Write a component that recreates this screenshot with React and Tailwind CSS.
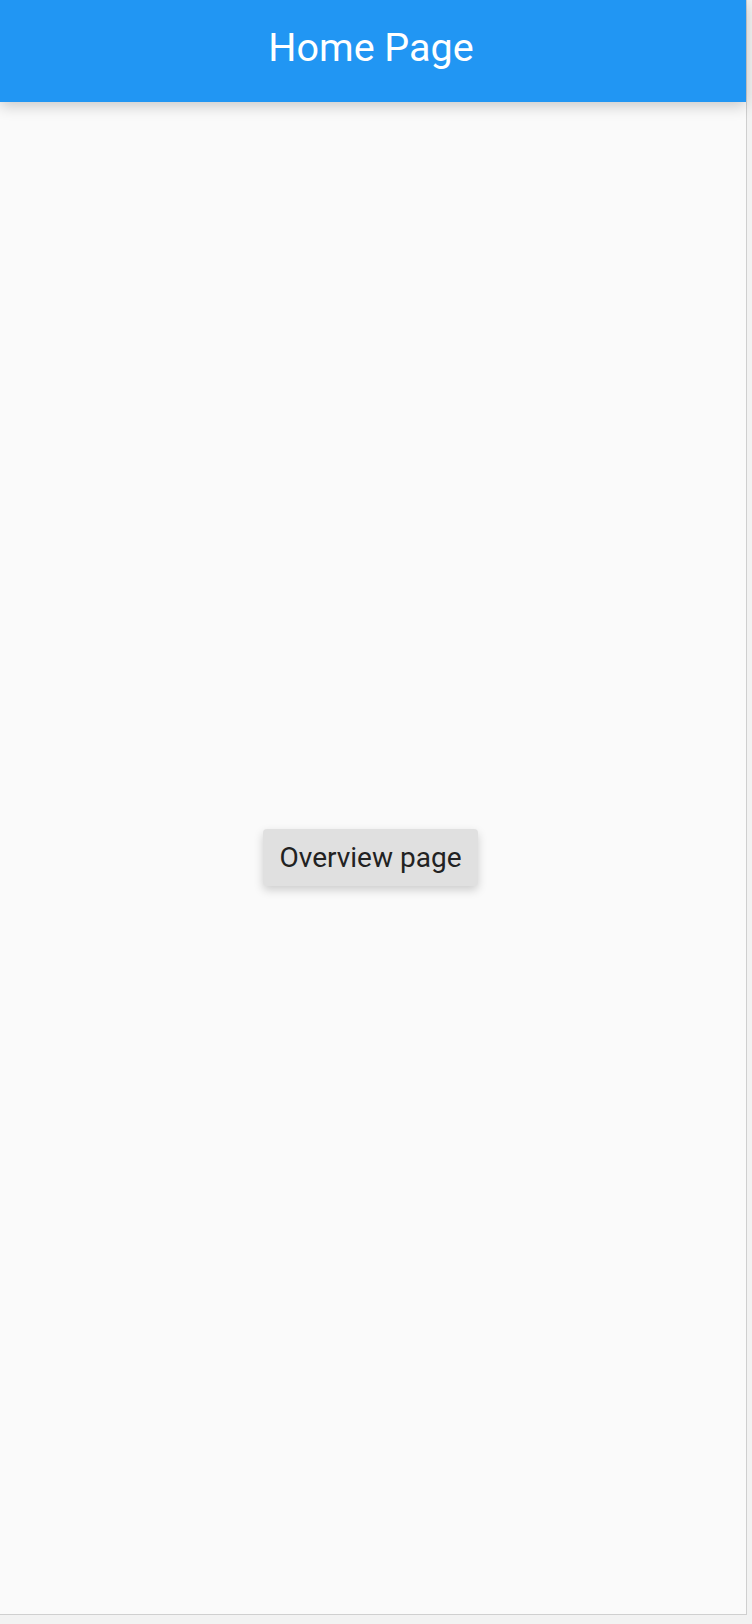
export default function App() {
  return (
    <div className="w-[752px] h-[1624px] bg-[#f2f2f2]" style={{ fontFamily: 'Roboto, "Noto Sans", sans-serif' }}>
      <div className="w-[747px] h-[1615px] border-r border-b border-[#cfcfcf] bg-[#fafafa] flex flex-col">
        <header className="h-[102px] shrink-0 bg-[#2196f3] flex items-center justify-center shadow-[0_4px_14px_rgba(0,0,0,0.2)] relative z-10">
          <h1 className="text-[39.5px] text-white font-normal leading-none pb-[6px] mr-[4px]">Home Page</h1>
        </header>
        <main className="flex-1 flex items-center justify-center">
          <button className="w-[215px] h-[57px] ml-[-5px] mt-[-2px] pt-[2px] rounded-[4px] bg-[#e0e0e0] text-[#222222] text-[28px] leading-none shadow-[0_4px_10px_rgba(0,0,0,0.18)]">
            Overview page
          </button>
        </main>
      </div>
    </div>
  );
}
